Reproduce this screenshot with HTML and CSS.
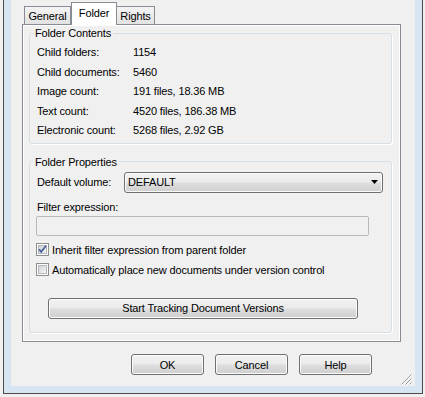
FILE: index.html
```html
<!DOCTYPE html>
<html lang="en">
<head>
<meta charset="UTF-8" />
<title>Folder Properties</title>
<link rel="stylesheet" href="styles.css">
</head>
<body>

<div class="window">
  <div class="dialog">

    <div class="tabs">
      <div class="tab tab-general">General</div>
      <div class="tab tab-folder active">Folder</div>
      <div class="tab tab-rights">Rights</div>
    </div>

    <div class="panel">

      <fieldset class="group group-contents">
        <legend>Folder Contents</legend>
        <div class="stats">
          <div class="stat"><span class="stat-label">Child folders:</span><span>1154</span></div>
          <div class="stat"><span class="stat-label">Child documents:</span><span>5460</span></div>
          <div class="stat"><span class="stat-label">Image count:</span><span>191 files, 18.36 MB</span></div>
          <div class="stat"><span class="stat-label">Text count:</span><span>4520 files, 186.38 MB</span></div>
          <div class="stat"><span class="stat-label">Electronic count:</span><span>5268 files, 2.92 GB</span></div>
        </div>
      </fieldset>

      <fieldset class="group group-props">
        <legend>Folder Properties</legend>
        <div class="props">
          <div class="field-row">
            <span class="field-label">Default volume:</span>
            <div class="combo">
              <span>DEFAULT</span>
              <svg width="7" height="4" viewBox="0 0 7 4"><path d="M0 0h7L3.5 4z" fill="#000"/></svg>
            </div>
          </div>

          <div class="filter-label">Filter expression:</div>
          <div class="textbox"></div>

          <label class="check">
            <svg class="box" width="13" height="13" viewBox="0 0 13 13">
              <defs>
                <linearGradient id="cb1" x1="0" y1="0" x2="1" y2="1">
                  <stop offset="0" stop-color="#cdd1d6"/>
                  <stop offset="1" stop-color="#f7f7f7"/>
                </linearGradient>
              </defs>
              <rect x="0.5" y="0.5" width="12" height="12" fill="#fff" stroke="#8e8f8f"/>
              <rect x="2.5" y="2.5" width="8" height="8" fill="url(#cb1)" stroke="#b4b8bd"/>
              <path d="M3 6.2l2.2 2.6L10 2.8" fill="none" stroke="#4a5f9a" stroke-width="1.7"/>
            </svg>
            Inherit filter expression from parent folder
          </label>
          <label class="check">
            <svg class="box" width="13" height="13" viewBox="0 0 13 13">
              <defs>
                <linearGradient id="cb2" x1="0" y1="0" x2="1" y2="1">
                  <stop offset="0" stop-color="#cdd1d6"/>
                  <stop offset="1" stop-color="#f7f7f7"/>
                </linearGradient>
              </defs>
              <rect x="0.5" y="0.5" width="12" height="12" fill="#fff" stroke="#8e8f8f"/>
              <rect x="2.5" y="2.5" width="8" height="8" fill="url(#cb2)" stroke="#b4b8bd"/>
            </svg>
            Automatically place new documents under version control
          </label>

          <button class="btn btn-wide">Start Tracking Document Versions</button>
        </div>
      </fieldset>

    </div>

    <div class="footer">
      <button class="btn">OK</button>
      <button class="btn">Cancel</button>
      <button class="btn">Help</button>
      <svg class="grip" width="12" height="12" viewBox="0 0 12 12">
        <path d="M11 1L1 11M11 5L5 11M11 9L9 11" stroke="#fff" stroke-width="1"/>
        <path d="M10.5 0.5L0.5 10.5M10.5 4.5L4.5 10.5M10.5 8.5L8.5 10.5" stroke="#9a9a9a" stroke-width="1"/>
      </svg>
    </div>

  </div>
</div>

</body>
</html>
```

FILE: styles.css
```css
body {
  margin: 0;
  background: #f0f0f0;
  font-family: "Liberation Sans", Arial, sans-serif;
  font-size: 11px;
  letter-spacing: -0.15px;
  color: #000;
}
.window {
  margin-left: 3px;
  width: 420px;
  height: 394px;
  box-sizing: border-box;
  border: 1px solid #4b4b4b;
  border-top: none;
  background: #d7e4f2;
  padding: 0 7px 7px;
}
.dialog {
  background: #f0f0f0;
  height: 386px;
  display: flex;
  flex-direction: column;
}

/* Tabs */
.tabs {
  display: flex;
  align-items: flex-end;
  height: 24px;
  margin-left: 13px;
}
.tab {
  box-sizing: border-box;
  height: 18px;
  border: 1px solid #898c95;
  border-bottom: none;
  background: linear-gradient(#f4f4f4, #e2e2e2);
  line-height: 18px;
  text-align: center;
}
.tab-general {
  width: 47px;
}
.tab-folder {
  width: 46px;
}
.tab-rights {
  width: 38px;
  border-left: none;
}
.tab.active {
  height: 23px;
  margin-bottom: -1px;
  background: #fff;
  line-height: 21px;
  position: relative;
  z-index: 1;
}
.panel {
  box-sizing: border-box;
  height: 318px;
  margin: 0 14px 0 11px;
  border: 1px solid #898c95;
  box-shadow: inset 1px 1px 0 #fff, inset -1px -1px 0 #fff;
  padding: 0 8px 0 6px;
}

/* Group boxes */
.group {
  margin: 0;
  padding: 0;
  min-width: 0;
  border: 1px solid #d5dfe5;
  border-radius: 3px;
  box-shadow: 1px 1px 0 #fff;
}
.group legend {
  padding: 0 2px;
  margin-left: 3px;
  line-height: 16px;
}
.stats {
  padding: 2px 0 2px 7px;
}
.stat {
  display: flex;
  height: 19.5px;
  line-height: 19.5px;
}
.stat-label {
  width: 96px;
}
.group-props {
  margin-top: 10px;
}
.props {
  padding: 2px 8px 13px 6px;
  display: flex;
  flex-direction: column;
  align-items: flex-start;
}
.field-row {
  display: flex;
  align-items: center;
  align-self: stretch;
}
.field-label {
  width: 87px;
  padding-left: 1px;
}
.combo {
  flex: 1;
  height: 21px;
  box-sizing: border-box;
  border: 1px solid #707070;
  border-radius: 3px;
  background: linear-gradient(#f2f2f2 0%, #ebebeb 45%, #dddddd 55%, #cfcfcf 100%);
  box-shadow: inset 0 0 0 1px #fafafa;
  display: flex;
  align-items: center;
  justify-content: space-between;
  padding: 0 4px 0 3px;
}
.filter-label {
  margin-top: 7px;
  padding-left: 1px;
  line-height: 15px;
}
.textbox {
  margin-top: 1px;
  width: 333px;
  height: 20px;
  box-sizing: border-box;
  border: 1px solid #b6b9bd;
  border-radius: 2px;
  background: #f0f0f0;
}
.check {
  display: flex;
  align-items: center;
  gap: 3px;
  height: 20px;
}
.check:first-of-type {
  margin-top: 4px;
}
.check .box {
  flex: none;
}

/* Buttons */
.btn {
  font: inherit;
  letter-spacing: inherit;
  color: #000;
  height: 21px;
  width: 73px;
  padding: 0;
  box-sizing: border-box;
  border: 1px solid #707070;
  border-radius: 3px;
  background: linear-gradient(#f2f2f2 0%, #ebebeb 45%, #dddddd 55%, #cfcfcf 100%);
  box-shadow: inset 0 0 0 1px #fbfbfb;
}
.btn-wide {
  width: 310px;
  margin: 18px 0 0 12px;
}
.footer {
  flex: 1;
  display: flex;
  align-items: flex-start;
  gap: 11px;
  padding: 12px 0 0 120px;
}
.grip {
  margin-left: auto;
  margin-right: 2px;
  align-self: flex-end;
}
```
